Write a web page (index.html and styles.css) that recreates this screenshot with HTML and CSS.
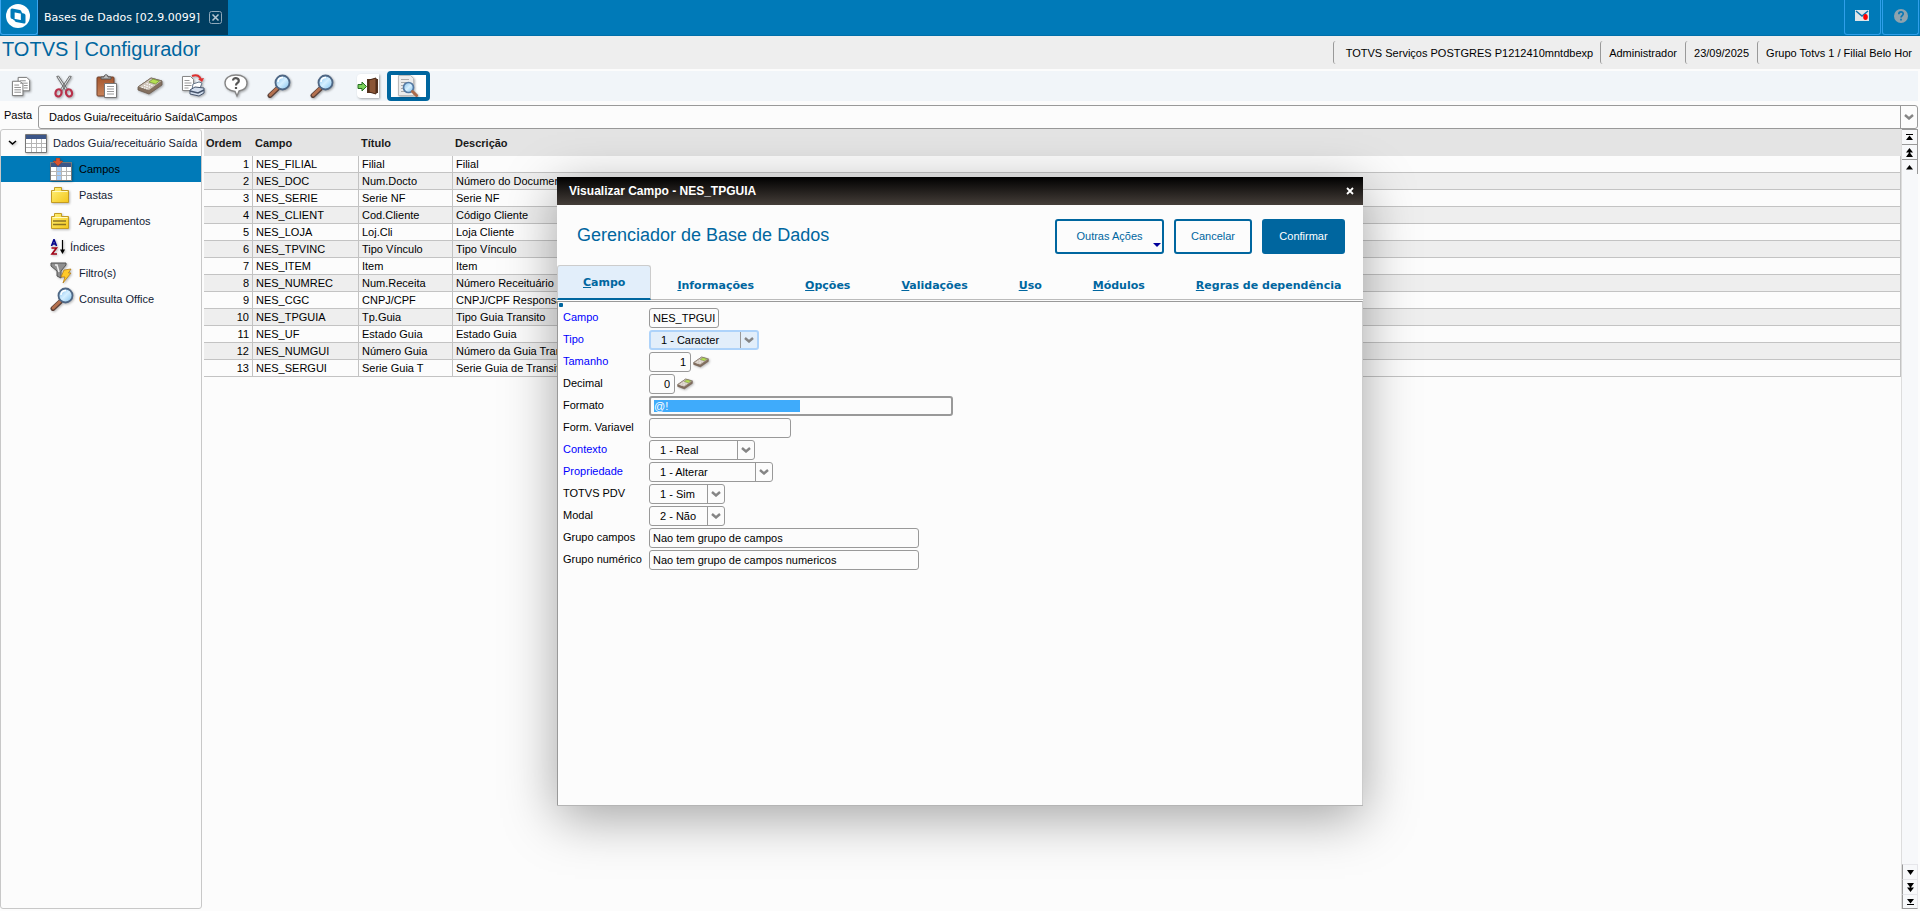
FILE: index.html
```html
<!DOCTYPE html>
<html lang="pt-BR">
<head>
<meta charset="utf-8">
<title>TOTVS | Configurador</title>
<link rel="stylesheet" href="styles.css">
</head>
<body>
<svg class="defs" aria-hidden="true">
  <defs>
    <linearGradient id="lens" x1="0" y1="0" x2="1" y2="1"><stop offset="0" stop-color="#7dbdec"/><stop offset=".5" stop-color="#d5efff"/><stop offset="1" stop-color="#7bbdec"/></linearGradient>
    <linearGradient id="gold" x1="0" y1="0" x2="1" y2="1"><stop offset="0" stop-color="#fff27a"/><stop offset="1" stop-color="#f4c61c"/></linearGradient>
    <linearGradient id="wood" x1="0" y1="0" x2="0" y2="1"><stop offset="0" stop-color="#a4552c"/><stop offset="1" stop-color="#c8835a"/></linearGradient>
    <symbol id="magnifier" viewBox="0 0 24 24">
      <path d="M10 15 3 21.500" stroke="#5a4038" stroke-width="5" stroke-linecap="round"/>
      <path d="M10 14.500 3.200 21" stroke="#b5714f" stroke-width="3" stroke-linecap="round"/>
      <circle cx="15.500" cy="8.500" r="7" fill="url(#lens)" stroke="#4e6684" stroke-width="1.800"/>
      <path d="M11 8c0-3 2-4.500 5-4.500" fill="none" stroke="#fff" stroke-width="1.500"/>
    </symbol>
    <symbol id="calc" viewBox="0 0 26 18">
      <path d="M1 10 14 1l11 3v4L12 17 1 13z" fill="#84705f" stroke="#6b5a4e" stroke-width=".8"/>
      <path d="M1 10 14 1l11 3-13 9.500z" fill="#cfc5ba" stroke="#79695c" stroke-width=".8"/>
      <path d="m12 5 4-3 6.500 2-4 3z" fill="#b5e052" stroke="#6c8a30" stroke-width=".7"/>
      <path d="m4.500 10 6 2M7 8.300l6 2M9.500 6.500l6 2" stroke="#fff" stroke-width="1.200" stroke-dasharray="1.500 1"/>
    </symbol>
    <symbol id="chev" viewBox="0 0 10 6"><path d="m1 1 4 3.500L9 1" fill="none" stroke="#858585" stroke-width="2.400"/></symbol>
    <symbol id="up" viewBox="0 0 7 5"><path d="M3.500 0 7 4.500H0z"/></symbol>
  </defs>
</svg>

<header class="topbar">
  <button class="brand" aria-label="Início">
    <svg width="24" height="24" viewBox="0 0 24 24"><circle cx="12" cy="12" r="12" fill="#fff"/><path d="M6 4.500 14 6q1.500.3 1.500 2v8.500L6 15q-1.500-.3-1.500-2V6q0-1.500 1.500-1.500z" fill="#007ab8"/><path d="M10 8l8 1.500q1.500.3 1.500 2V18q0 1.800-1.500 1.500L10 18q-1.500-.3-1.500-2V9.500Q8.500 8 10 8z" fill="#007ab8"/><path d="m8 7.500 7.500 1.500v8L8 15.500z" fill="#fff" stroke="#007ab8" stroke-width="1.300"/></svg>
  </button>
  <div class="apptab"><span>Bases de Dados [02.9.0099]</span>
    <button aria-label="Fechar aba"><svg width="13" height="13" viewBox="0 0 13 13"><rect x=".5" y=".5" width="12" height="12" rx="2" fill="none" stroke="#8fa9ba"/><path d="m3.500 3.500 6 6m0-6-6 6" stroke="#b6c7d2" stroke-width="1.500"/></svg></button>
  </div>
  <button class="topbtn first" aria-label="Mensagens"><svg width="15" height="12" viewBox="0 0 15 12"><path d="M0 0h14v11H0z" fill="#dfe5e9"/><path d="m1 1 6 5 6-5" fill="none" stroke="#0f74ad" stroke-width="1.500"/><ellipse cx="10.500" cy="7" rx="2.300" ry="3" fill="#f00"/></svg></button>
  <button class="topbtn" aria-label="Ajuda"><svg width="14" height="14" viewBox="0 0 14 14"><circle cx="7" cy="7" r="7" fill="#8fa3ae"/><path d="M4.800 5.300C4.800 2 9.300 2.200 9.200 5 9.200 6.500 7 6.700 7 8.500M7 9.800v1.700" fill="none" stroke="#0a77b4" stroke-width="1.700"/></svg></button>
</header>

<div class="titlebar">
  <h1>TOTVS | Configurador</h1>
  <div class="session">
    <span class="env">TOTVS Serviços POSTGRES P1212410mntdbexp</span><span>Administrador</span><span>23/09/2025</span><span>Grupo Totvs 1 / Filial Belo Hor</span>
  </div>
</div>

<div class="toolbar">
  <button aria-label="Copiar"><svg width="21" height="21" viewBox="0 0 22 22"><g fill="#fff" stroke="#777"><path d="M7.500 1.500h9l3 3v11h-12z"/><path d="M1.500 5.500h8l3 3v12h-11z"/></g><path d="M9.500 5h6m-6 2.500h8m-4 2.500h4m-4 2.500h4M3.500 9.500h5m-5 2.500h7m-7 2.500h7m-7 2.500h7" stroke="#8a8a8a"/></svg></button>
  <button aria-label="Recortar"><svg width="20" height="23" viewBox="0 0 22 24"><path d="m3 1 2-.5 10 15-2 1zM19 1l-2-.5-10 15 2 1z" fill="#d9dcdf" stroke="#666"/><ellipse cx="5" cy="19" rx="3.300" ry="4" fill="none" stroke="#b9314b" stroke-width="2.400" transform="rotate(20 5 19)"/><ellipse cx="16.500" cy="19" rx="3.300" ry="4" fill="none" stroke="#b9314b" stroke-width="2.400" transform="rotate(-20 16.500 19)"/></svg></button>
  <button aria-label="Colar"><svg width="22" height="24" viewBox="0 0 22 24"><rect x="1" y="3" width="17" height="19" rx="1" fill="url(#wood)" stroke="#71432e"/><path d="M5 5V3h3c0-3 4-3 4 0h3v2z" fill="#bbb" stroke="#555"/><path d="M8.500 9.500h12v14h-12z" fill="#fff" stroke="#777"/><path d="M11 12.500h7m-7 2.500h7m-7 2.500h7m-7 2.500h7" stroke="#999"/></svg></button>
  <button aria-label="Calculadora"><svg width="26" height="18"><use href="#calc"/></svg></button>
  <button aria-label="Imprimir"><svg width="24" height="24" viewBox="0 0 24 24"><path d="M1.500 2.500h8l3 3v11h-11z" fill="#fff" stroke="#888"/><path d="M3.500 6.500h5m-5 2.500h7m-7 2.500h7m-7 2.500h4" stroke="#999"/><path d="M11 2c5-2 8 0 9 4" fill="none" stroke="#df3030" stroke-width="2"/><path d="m17 5 6-1-2 4z" fill="#df3030"/><path d="m12 10 6-2 3 1-2 5-8 2z" fill="#fff" stroke="#66778b"/><path d="m9 16 5-3 9 1v5l-5 3-9-2z" fill="#d3deee" stroke="#45546c"/><path d="m9 17 8 2 6-3" fill="none" stroke="#45546c" stroke-width="1.500"/></svg></button>
  <button aria-label="Ajuda"><svg width="24" height="24" viewBox="0 0 24 24"><path d="M12 1C5 1 1 4.500 1 9s3 7.500 10 8.500L13 22l2-5c5-1 8-4 8-8 0-4.500-4-8-11-8z" fill="#fff" stroke="#858585" stroke-width="1.400"/><path d="M9 6.500C9 3 15 3.500 14.800 7c0 2-2.800 2-2.800 4.500M12 13v2" fill="none" stroke="#555" stroke-width="2.200"/></svg></button>
  <button aria-label="Pesquisar"><svg width="24" height="24"><use href="#magnifier"/></svg></button>
  <button aria-label="Pesquisar próximo"><svg width="24" height="24"><use href="#magnifier"/></svg></button>
  <button class="exit" aria-label="Sair"><svg width="22" height="24" viewBox="0 0 22 24"><path d="M4 0h18v24H4a4 4 0 0 1-4-4V4a4 4 0 0 1 4-4z" fill="#fff"/><path d="M10 5h11v14H10z" fill="#55331f"/><path d="m12 6 7-2v16l-7-2z" fill="#8b5636" stroke="#4b2a18"/><path d="M1 10.500h4V8l4.500 4.500L5 17v-2.500H1z" fill="#7bd25a" stroke="#276d26"/></svg></button>
  <button class="focus" aria-label="Visualizar"><svg width="22" height="22" viewBox="0 0 22 22"><path d="M1.500.5h12l3 3v17h-15z" fill="#ececec" stroke="#bbb"/><path d="M4 4.500h8M4 7.500h8M4 10.500h3M4 13.500h3M4 16.500h8" stroke="#aaa"/><circle cx="11.500" cy="12.500" r="5" fill="url(#lens)" stroke="#5579a2" stroke-width="1.700"/><path d="m15.500 16.500 4 4" stroke="#ad6b4a" stroke-width="3" stroke-linecap="round"/></svg></button>
</div>

<div class="pathrow">
  <label for="pasta">Pasta</label>
  <span class="combo"><select id="pasta"><option>Dados Guia/receituário Saída\Campos</option></select><span class="arrow"><svg width="10" height="6"><use href="#chev"/></svg></span></span>
</div>

<main class="workspace">
  <nav class="tree">
    <a href="#raiz" class="root"><svg width="9" height="6" viewBox="0 0 9 6"><path d="m1 1 3.500 3L8 1" fill="none" stroke="#000" stroke-width="1.600"/></svg>
      <svg width="22" height="19" viewBox="0 0 22 19"><path d="M.5.500h21v18H.5z" fill="#fff" stroke="#777"/><path d="M1 1h20v4H1z" fill="#3c5688"/><path d="M1 9.500h20M1 13.500h20M6.500 5v13m5-13v13m5-13v13" stroke="#b5b5b5"/></svg><span>Dados Guia/receituário Saída</span></a>
    <a href="#campos" class="active"><svg width="22" height="23" viewBox="0 0 22 23"><path d="M.5 4.500h21v18H.5z" fill="#fff" stroke="#777"/><path d="M1 5h20v4H1z" fill="#3c5688"/><path d="M6 9h5v13H6z" fill="#a6cdfa"/><path d="M1 13.500h20M1 17.500h20M6.500 9v13m5-13v13m5-13v13" stroke="#b5b5b5"/><path d="M6 0h4v3h3L8 8 3 3h3z" fill="#d9542f" stroke="#96371f" stroke-width=".5"/></svg><span>Campos</span></a>
    <a href="#pastas"><svg width="20" height="17" viewBox="0 0 20 17"><path d="M1.500 3.500h3v-3h7v3h7v12h-17z" fill="url(#gold)" stroke="#c39b22"/><path d="M2.500 4.500h15" stroke="#fffbc5"/></svg><span>Pastas</span></a>
    <a href="#agrupamentos"><svg width="20" height="17" viewBox="0 0 20 17"><path d="M1.500 3.500h3v-3h7v3h7v12h-17z" fill="url(#gold)" stroke="#c39b22"/><path d="M2.500 4.500h15" stroke="#fffbc5"/><path d="M3 8h13M3 11.500h13" stroke="#8d7423" stroke-width="1.300"/></svg><span>Agrupamentos</span></a>
    <a href="#indices" class="narrow"><svg width="16" height="16" viewBox="0 0 16 16"><path d="m1.500 7 2.500-6.500L6.500 7M2.500 5h3" fill="none" stroke="#00008b" stroke-width="1.600"/><path d="M1.500 9h5L2 15h5" fill="none" stroke="#a00014" stroke-width="1.600"/><path d="M12.500 1v12" stroke="#000" stroke-width="1.200"/><path d="M10 10.500h5L12.500 15z"/></svg><span>Índices</span></a>
    <a href="#filtros"><svg width="22" height="22" viewBox="0 0 22 22"><path d="M1 1h15v2l-5 6v7l-4-2V9L1 4z" fill="#8f8f8f" stroke="#555"/><path d="M5 3h2l2 7" stroke="#eee" fill="none" stroke-width="1.500"/><path d="m14 8 7-1-2.500 4H21l-8 10 2-6h-4z" fill="#ffc928" stroke="#aa7210" stroke-width=".7"/></svg><span>Filtro(s)</span></a>
    <a href="#consulta"><svg width="24" height="24"><use href="#magnifier"/></svg><span>Consulta Office</span></a>
  </nav>

  <section class="gridwrap">
    <table class="grid">
      <colgroup><col class="c-order"><col class="c-field"><col class="c-title"><col></colgroup>
      <thead><tr><th>Ordem</th><th>Campo</th><th>Título</th><th>Descrição</th></tr></thead>
      <tbody>
        <tr><td>1</td><td>NES_FILIAL</td><td>Filial</td><td>Filial</td></tr>
        <tr><td>2</td><td>NES_DOC</td><td>Num.Docto</td><td>Número do Documento</td></tr>
        <tr><td>3</td><td>NES_SERIE</td><td>Serie NF</td><td>Serie NF</td></tr>
        <tr><td>4</td><td>NES_CLIENT</td><td>Cod.Cliente</td><td>Código Cliente</td></tr>
        <tr><td>5</td><td>NES_LOJA</td><td>Loj.Cli</td><td>Loja Cliente</td></tr>
        <tr><td>6</td><td>NES_TPVINC</td><td>Tipo Vínculo</td><td>Tipo Vínculo</td></tr>
        <tr><td>7</td><td>NES_ITEM</td><td>Item</td><td>Item</td></tr>
        <tr><td>8</td><td>NES_NUMREC</td><td>Num.Receita</td><td>Número Receituário</td></tr>
        <tr><td>9</td><td>NES_CGC</td><td>CNPJ/CPF</td><td>CNPJ/CPF Responsável</td></tr>
        <tr><td>10</td><td>NES_TPGUIA</td><td>Tp.Guia</td><td>Tipo Guia Transito</td></tr>
        <tr><td>11</td><td>NES_UF</td><td>Estado Guia</td><td>Estado Guia</td></tr>
        <tr><td>12</td><td>NES_NUMGUI</td><td>Número Guia</td><td>Número da Guia Transito</td></tr>
        <tr><td>13</td><td>NES_SERGUI</td><td>Serie Guia T</td><td>Serie Guia de Transito</td></tr>
      </tbody>
    </table>
  </section>

  <div class="scroller">
    <button aria-label="Primeiro"><svg width="7" height="6" viewBox="0 0 7 6"><path d="M0 0h7v1H0zM3.500 1.500 7 6H0z"/></svg></button>
    <button aria-label="Página anterior"><svg width="7" height="9" viewBox="0 0 7 9"><path d="M3.500 0 7 4.500H0zM3.500 4 7 9H0z"/></svg></button>
    <button aria-label="Anterior"><svg width="7" height="5"><use href="#up"/></svg></button>
    <span class="track"></span>
    <button class="low" aria-label="Próximo"><svg width="7" height="5" viewBox="0 0 7 5"><path d="M0 0h7L3.500 5z"/></svg></button>
    <button class="low" aria-label="Próxima página"><svg width="7" height="9" viewBox="0 0 7 9"><path d="M0 0h7L3.500 5zM0 4.500h7L3.500 9z"/></svg></button>
    <button class="low" aria-label="Último"><svg width="7" height="6" viewBox="0 0 7 6"><path d="M0 0h7L3.500 4.500zM0 5h7v1H0z"/></svg></button>
  </div>
</main>

<div class="dialog" role="dialog" aria-labelledby="dlgtitle">
  <div class="dlg-title"><span id="dlgtitle">Visualizar Campo - NES_TPGUIA</span>
    <button aria-label="Fechar"><svg width="8" height="8" viewBox="0 0 8 8"><path d="m1 1 6 6m0-6L1 7" stroke="#fff" stroke-width="1.800"/></svg></button></div>
  <div class="dlg-head">
    <h2>Gerenciador de Base de Dados</h2>
    <button class="btn more">Outras Ações<svg width="8" height="4" viewBox="0 0 8 4"><path d="M0 0h8L4 4z" fill="#00009b"/></svg></button>
    <button class="btn cancel">Cancelar</button>
    <button class="btn confirm">Confirmar</button>
  </div>
  <nav class="tabs">
    <a href="#t1" class="on"><u>C</u>ampo</a><a href="#t2"><u>I</u>nformações</a><a href="#t3"><u>O</u>pções</a><a href="#t4"><u>V</u>alidações</a><a href="#t5"><u>U</u>so</a><a href="#t6"><u>M</u>ódulos</a><a href="#t7"><u>R</u>egras de dependência</a>
  </nav>
  <form class="form">
    <i class="knob"></i>
    <label class="req" for="f1">Campo</label><div><input id="f1" class="w-name" value="NES_TPGUI"></div>
    <label class="req" for="f2">Tipo</label><div><span class="combo w-type focused"><select id="f2"><option>1 - Caracter</option></select><span class="arrow"><svg width="10" height="6"><use href="#chev"/></svg></span></span></div>
    <label class="req" for="f3">Tamanho</label><div><input id="f3" class="w-size num" value="1"><svg class="mini" width="16" height="12"><use href="#calc"/></svg></div>
    <label for="f4">Decimal</label><div><input id="f4" class="w-dec num" value="0"><svg class="mini" width="16" height="12"><use href="#calc"/></svg></div>
    <label for="f5">Formato</label><div><input id="f5" class="w-format" value="@!"></div>
    <label for="f6">Form. Variavel</label><div><input id="f6" class="w-var" value=""></div>
    <label class="req" for="f7">Contexto</label><div><span class="combo w-ctx"><select id="f7"><option>1 - Real</option></select><span class="arrow"><svg width="10" height="6"><use href="#chev"/></svg></span></span></div>
    <label class="req" for="f8">Propriedade</label><div><span class="combo w-prop"><select id="f8"><option>1 - Alterar</option></select><span class="arrow"><svg width="10" height="6"><use href="#chev"/></svg></span></span></div>
    <label for="f9">TOTVS PDV</label><div><span class="combo w-yn"><select id="f9"><option>1 - Sim</option></select><span class="arrow"><svg width="10" height="6"><use href="#chev"/></svg></span></span></div>
    <label for="f10">Modal</label><div><span class="combo w-yn"><select id="f10"><option>2 - Não</option></select><span class="arrow"><svg width="10" height="6"><use href="#chev"/></svg></span></span></div>
    <label for="f11">Grupo campos</label><div><input id="f11" class="w-group" value="Nao tem grupo de campos"></div>
    <label for="f12">Grupo numérico</label><div><input id="f12" class="w-group" value="Nao tem grupo de campos numericos"></div>
  </form>
</div>
</body>
</html>
```
FILE: styles.css
```css
* { box-sizing: border-box; }
body {
  margin: 0;
  height: 100vh;
  display: flex;
  flex-direction: column;
  overflow: hidden;
  position: relative;
  background: #fcfcfc;
  color: #000;
  font: 11px/14px "Liberation Sans", Arial, sans-serif;
}
button, input, select { font: inherit; color: inherit; margin: 0; padding: 0; border: 0; background: none; }
a { color: inherit; text-decoration: none; }
svg { display: block; flex: none; }
.defs { position: absolute; width: 0; height: 0; }
h1, h2 { margin: 0; font-weight: normal; color: #00669f; }

/* top bar */
.topbar { height: 36px; flex: none; display: flex; background: #007ab8; border-bottom: 1px solid #006fa9; padding-right: 1px; }
.topbar button { display: flex; align-items: center; justify-content: center; }
.brand { width: 38px; height: 35px; border: 1px solid #3aa5ef; border-top: 0; border-radius: 0 0 3px 3px; }
.topbar .brand { padding: 0 2px 2px 0; }
.apptab {
  display: flex; align-items: center; gap: 5px; padding: 0 6px; height: 35px;
  background: #003e61; color: #fff; font-family: "DejaVu Sans", sans-serif;
}
.apptab span { min-width: 160px; }
.topbtn { width: 37px; height: 35px; border: 1px solid #2f9fea; border-top: 0; border-radius: 0 0 3px 3px; }
.topbar .topbtn { padding-bottom: 3px; }
.topbtn.first { margin-left: auto; margin-right: 1px; }

/* module title */
.titlebar { height: 33px; flex: none; display: flex; justify-content: space-between; background: #eee; }
.titlebar h1 { font-size: 20px; line-height: 26px; padding-left: 2px; }
.session { display: flex; padding-top: 5px; height: 28px; }
.session span { border-left: 1px solid #999; border-radius: 3px; padding: 0 8px; line-height: 24px; }
.session .env { padding: 0 7px 0 12px; }

/* toolbar */
.toolbar { margin: 2px 2px 4px 0; height: 30px; flex: none; display: flex; background: #f1f5f9; }
.toolbar button { width: 43px; display: flex; align-items: center; justify-content: center; padding-right: 1px; }
.toolbar svg { filter: drop-shadow(1px 1px 1px #0005); }
.toolbar .exit { padding: 0 0 0 4px; }
.toolbar .focus { border: 4px solid #00669f; border-radius: 4px; background: #fff; }

/* combo boxes */
.combo { position: relative; display: flex; border: 1px solid #999; border-radius: 3px; background: #fcfcfc; }
.combo select { appearance: none; flex: 1; width: 100%; height: 18px; padding: 0 18px 0 10px; outline: 0; }
.combo .arrow {
  position: absolute; right: 0; top: 0; bottom: 0; width: 17px; border-left: 1px solid #999;
  display: flex; align-items: center; justify-content: center; pointer-events: none;
}
.combo.focused { border: 2px solid #aed3fa; background: #e2eefa; }
.combo.focused select { height: 16px; padding-left: 10px; }
.pathrow { flex: none; display: flex; gap: 6px; padding: 0 2px 0 4px; height: 24px; }
.pathrow label { line-height: 20px; width: 28px; }
.pathrow .combo { flex: 1; }
.pathrow select { height: 22px; }

/* workspace */
.workspace { flex: 1; min-height: 0; display: flex; padding: 0 2px 2px 0; }
.tree { width: 202px; border: 1px solid #c8c8c8; border-radius: 3px; }
.tree a { height: 26px; display: grid; grid-template-columns: 23px 1fr; align-items: center; padding-left: 49px; color: #122235; }
.tree span { margin-left: 6px; white-space: nowrap; }
.tree svg { filter: drop-shadow(1px 1px 1px #0004); }
.tree .narrow { grid-template-columns: 14px 1fr; }
.tree .root { grid-template-columns: 17px 22px 1fr; padding-left: 7px; }
.tree .active { background: #007ab8; color: #000; }
.gridwrap { flex: 1; margin-left: 2px; border-right: 1px solid #ddd; }
.grid { width: 100%; table-layout: fixed; border-collapse: separate; border-spacing: 0; }
.c-order { width: 49px; }
.c-field { width: 106px; }
.c-title { width: 94px; }
.grid th { height: 27px; padding: 0 2px; text-align: left; background: #e4e4e4; color: #1a1a1a; }
.grid td { height: 17px; padding: 0 3px; line-height: 16px; border-bottom: 1px solid #c3c3c3; border-right: 1px solid #c3c3c3; white-space: nowrap; }
.grid td:first-child { text-align: right; }
.grid tr:nth-child(even) td { background: #eee; }
.scroller { width: 16px; display: flex; flex-direction: column; background: #f7f8fa; }
.scroller button { height: 15px; display: flex; align-items: center; justify-content: center; border: solid #999; border-width: 1px 1px 0 0; }
.scroller .track { flex: 1; }
.scroller .low { border-color: #e6e6ea #e6e6ea #999 #999; border-width: 1px 1px 0 1px; }
.scroller .low:last-child { border-bottom-width: 1px; }

/* floating window */
.dialog {
  position: absolute; left: 557px; top: 177px; width: 806px; height: 629px;
  display: flex; flex-direction: column; background: #fcfcfc;
  border-bottom: 1px solid #b5b5b5;
  box-shadow: 0 12px 50px rgba(0, 0, 0, .35);
}
.dlg-title {
  height: 28px; flex: none; display: flex; align-items: center; justify-content: space-between;
  padding: 0 9px 0 12px; color: #fff; font-size: 12px; font-weight: bold;
  background: linear-gradient(#000, #453e39);
}
.dlg-head { height: 60px; flex: none; display: flex; gap: 10px; padding: 14px 18px 0 20px; }
.dlg-head h2 { flex: 1; font-size: 18px; line-height: 32px; }
.btn { height: 35px; border: 2px solid #00669f; border-radius: 3px; color: #00669f; position: relative; padding-bottom: 2px; }
.more { width: 109px; }
.more svg { position: absolute; right: 1px; bottom: 5px; }
.cancel { width: 78px; }
.confirm { width: 83px; background: #00669f; color: #fff; }
.tabs { height: 35px; flex: none; display: flex; gap: 1px; border-bottom: 1px solid #bbb; font-family: "DejaVu Sans", sans-serif; font-weight: bold; color: #00669f; }
.tabs a { padding: 0 25px; line-height: 42px; white-space: nowrap; }
.tabs .on { height: 35px; line-height: 34px; background: #e2eefa; border: 1px solid #ccc; border-bottom: 2px solid #00669f; border-radius: 3px 3px 0 0; }
.form {
  flex: 1; margin-top: 1px; position: relative;
  display: grid; grid-template-columns: 86px 1fr; grid-auto-rows: 22px; align-content: start;
  padding: 6px 0 0 5px; border: 1px solid #999; border-right-color: #ccc; border-bottom: 0;
}
.knob { position: absolute; left: 1px; top: 1px; width: 4px; height: 4px; background: #00669f; border-radius: 1px; }
.form label { line-height: 18px; }
.form .req { color: #00f; }
.form div { display: flex; align-items: flex-start; }
.form input { height: 20px; border: 1px solid #999; border-radius: 3px; padding: 0 3px; background: #fcfcfc; outline: 0; }
.form input.num { text-align: right; padding-right: 4px; }
.mini { margin: 4px 0 0 2px; filter: drop-shadow(1px 1px 1px #0004); }
.w-name { width: 70px; }
.w-type { width: 110px; }
.w-size { width: 42px; }
.w-dec { width: 26px; }
.form .w-format { width: 304px; border-width: 2px; color: #fff; background: linear-gradient(#3fabfb, #3fabfb) 3px 2px / 146px 12px no-repeat; }
.w-var { width: 142px; }
.w-ctx { width: 106px; }
.w-prop { width: 124px; }
.w-yn { width: 76px; }
.w-group { width: 270px; }
```
